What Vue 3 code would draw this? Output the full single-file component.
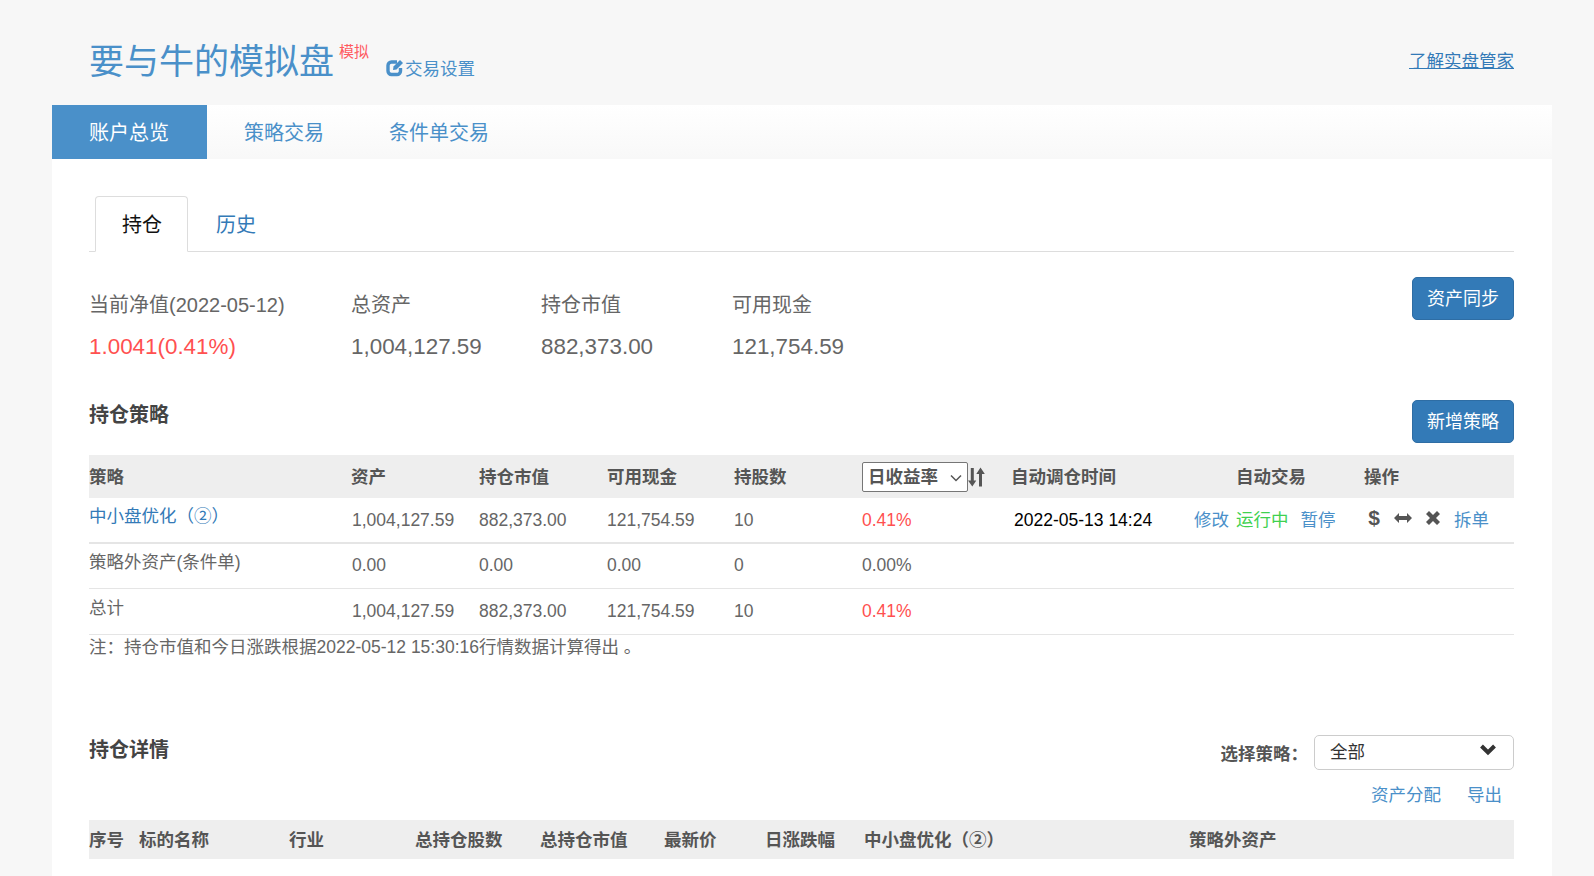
<script setup>
const stats = [
  { label: '当前净值(2022-05-12)', value: '1.0041(0.41%)', cls: 'red', w: 262 },
  { label: '总资产', value: '1,004,127.59', cls: '', w: 190 },
  { label: '持仓市值', value: '882,373.00', cls: '', w: 191 },
  { label: '可用现金', value: '121,754.59', cls: '', w: 160 },
]
const detailHead = ['序号', '标的名称', '行业', '总持仓股数', '总持仓市值', '最新价', '日涨跌幅', '中小盘优化（②）', '策略外资产']
const detailCols = [50, 150, 126, 125, 124, 101, 99, 325, 325]
const strategyCols = [262, 128, 128, 127, 128, 149, 183, 170, 150]
</script>

<template>
  <div class="page">
    <header class="top">
      <div class="brand">
        <span class="title">要与牛的模拟盘</span>
        <sup class="tag">模拟</sup>
        <a class="setting">
          <svg class="edit" viewBox="0 0 19 19" width="19" height="19">
            <path d="M14.500 10v3A3.500 3.500 0 0 1 11 16.500H5.500A3.500 3.500 0 0 1 2 13V7.500A3.500 3.500 0 0 1 5.500 4H11" fill="none" stroke="#4a90c9" stroke-width="3.400"/>
            <path d="M7.500 8.500 14 2l3 3-6.500 6.500-3.500.5z" fill="#4a90c9"/>
          </svg><span class="setting-text">交易设置</span>
        </a>
      </div>
      <a class="learn">了解实盘管家</a>
    </header>

    <nav class="nav">
      <a class="nav-item active">账户总览</a>
      <a class="nav-item">策略交易</a>
      <a class="nav-item third">条件单交易</a>
    </nav>

    <main class="panel">
      <div class="tabs">
        <a class="tab on">持仓</a>
        <a class="tab">历史</a>
      </div>

      <section class="summary">
        <div class="stats">
          <div v-for="s in stats" :key="s.label" class="stat" :style="{ width: s.w + 'px' }">
            <div class="stat-label">{{ s.label }}</div>
            <div class="stat-value" :class="s.cls">{{ s.value }}</div>
          </div>
        </div>
        <button class="btn">资产同步</button>
      </section>

      <section class="section-head">
        <h3>持仓策略</h3>
        <button class="btn">新增策略</button>
      </section>

      <table class="grid strategy">
        <colgroup>
          <col v-for="(c, i) in strategyCols" :key="i" :style="{ width: c + 'px' }" />
        </colgroup>
        <thead>
          <tr>
            <th>策略</th>
            <th>资产</th>
            <th>持仓市值</th>
            <th>可用现金</th>
            <th>持股数</th>
            <th class="sort-cell">
              <div class="sort">
                <div class="sort-box">
                  <select class="sort-select">
                    <option>日收益率</option>
                  </select>
                  <svg class="sort-chevron" viewBox="0 0 12 8" width="12" height="8">
                    <path d="M1 1.500 6 6.500 11 1.500" fill="none" stroke="#555" stroke-width="1.500"/>
                  </svg>
                </div>
                <svg viewBox="0 0 17 20" width="17" height="20">
                  <path d="M2.800 1h3v12.500h2.500L4.300 19.500 0 13.500h2.800z" fill="#555"/>
                  <path d="M11 19.500h3V7h2.800L12.500 .5 8.300 7H11z" fill="#555"/>
                </svg>
              </div>
            </th>
            <th>自动调仓时间</th>
            <th class="auto-head">自动交易</th>
            <th>操作</th>
          </tr>
        </thead>
        <tbody>
          <tr class="r1">
            <td class="name"><a class="link">中小盘优化（②）</a></td>
            <td class="asset">1,004,127.59</td>
            <td>882,373.00</td>
            <td>121,754.59</td>
            <td>10</td>
            <td class="red">0.41%</td>
            <td class="date">2022-05-13 14:24</td>
            <td>
              <div class="auto">
                <a class="link">修改</a>
                <span class="green">运行中</span>
                <a class="link pause">暂停</a>
              </div>
            </td>
            <td>
              <div class="ops">
                <span class="dollar">$</span>
                <svg class="swap" viewBox="0 0 18 10" width="18" height="10">
                  <path d="M0 5l5-5v3h8V0l5 5-5 5V7H5v3z" fill="#555"/>
                </svg>
                <svg viewBox="0 0 16 16" width="16" height="16">
                  <path d="M1 4l3-3 4 4 4-4 3 3-4 4 4 4-3 3-4-4-4 4-3-3 4-4z" fill="#555"/>
                </svg>
                <a class="link">拆单</a>
              </div>
            </td>
          </tr>
          <tr class="r2">
            <td class="name">策略外资产(条件单)</td>
            <td class="asset">0.00</td>
            <td>0.00</td>
            <td>0.00</td>
            <td>0</td>
            <td>0.00%</td>
            <td></td>
            <td></td>
            <td></td>
          </tr>
          <tr class="r3">
            <td class="name">总计</td>
            <td class="asset">1,004,127.59</td>
            <td>882,373.00</td>
            <td>121,754.59</td>
            <td>10</td>
            <td class="red">0.41%</td>
            <td></td>
            <td></td>
            <td></td>
          </tr>
        </tbody>
      </table>
      <p class="note">注：持仓市值和今日涨跌根据2022-05-12 15:30:16行情数据计算得出 。</p>

      <section class="detail-head">
        <h3>持仓详情</h3>
        <div class="filters">
          <div class="pick">
            <label>选择策略：</label>
            <div class="fake-select">
              <span class="fake-value">全部</span>
              <svg viewBox="0 0 18 12" width="18" height="12">
                <path d="M2.500 2 9 8.500 15.500 2" fill="none" stroke="#333" stroke-width="4"/>
              </svg>
            </div>
          </div>
          <div class="tools">
            <a class="link">资产分配</a>
            <a class="link">导出</a>
          </div>
        </div>
      </section>

      <table class="grid detail">
        <colgroup>
          <col v-for="(c, i) in detailCols" :key="i" :style="{ width: c + 'px' }" />
        </colgroup>
        <thead>
          <tr>
            <th v-for="h in detailHead" :key="h">{{ h }}</th>
          </tr>
        </thead>
        <tbody>
          <tr>
            <td></td>
            <td>东鹏饮料</td>
            <td colspan="7"></td>
          </tr>
        </tbody>
      </table>
    </main>
  </div>
</template>

<style>
html, body {
  margin: 0;
  height: 876px;
  overflow: hidden;
  background: #f7f7f7;
}
</style>

<style scoped>
.page {
  width: 1500px;
  margin-left: 52px;
  font-family: "Liberation Sans", "Noto Sans CJK SC", sans-serif;
  font-size: 17.5px;
  color: #666;
}
a { cursor: pointer; }
.top {
  height: 105px;
  box-sizing: border-box;
  padding: 0 38px 0 37px;
  display: flex;
  justify-content: space-between;
  align-items: flex-start;
}
.brand {
  display: flex;
  align-items: flex-start;
  padding-top: 36px;
}
.title {
  font-size: 35px;
  line-height: 52px;
  color: #4a90c9;
}
.tag {
  font-size: 15px;
  line-height: 20px;
  color: #ff5a5f;
  margin: 6px 0 0 5px;
  vertical-align: baseline;
}
.setting {
  display: flex;
  align-items: center;
  margin-left: 17px;
  margin-top: 19px;
  line-height: 26px;
  color: #4a90c9;
}
.edit { margin-bottom: 3px; }
.setting-text { padding-top: 1px; }
.learn {
  margin-top: 48px;
  line-height: 26px;
  color: #337ab7;
  text-decoration: underline;
}
.nav {
  height: 54px;
  display: flex;
  background: linear-gradient(#ffffff, #f8f8f8);
}
.nav-item {
  padding: 0 37px;
  line-height: 56px;
  height: 54px;
  font-size: 20px;
  color: #4a90c9;
}
.nav-item.active {
  padding-right: 38px;
  background: #4a90c9;
  color: #fff;
}
.nav-item.third { margin-left: -9px; }
.panel {
  background: #fff;
  padding: 37px 38px 0 37px;
  height: 700px;
}
.tabs {
  height: 56px;
  box-sizing: border-box;
  border-bottom: 1px solid #ddd;
  display: flex;
  padding-left: 6px;
}
.tab {
  box-sizing: border-box;
  height: 56px;
  padding: 0 26px 0 27px;
  border: 1px solid transparent;
  border-radius: 4px 4px 0 0;
  font-size: 20px;
  line-height: 56px;
  color: #337ab7;
}
.tab.on {
  padding: 0 25px 0 26px;
  border-color: #ddd;
  border-bottom-color: #fff;
  background: #fff;
  color: #111;
}
.summary {
  display: flex;
  justify-content: space-between;
  align-items: flex-start;
  padding-top: 25px;
  height: 123px;
  box-sizing: content-box;
}
.stats {
  display: flex;
  padding-top: 14px;
}
.stat-label {
  font-size: 20px;
  line-height: 28px;
  color: #666;
}
.stat-value {
  font-size: 22.400px;
  line-height: 30px;
  margin-top: 13px;
  color: #666;
}
.btn {
  width: 102px;
  height: 43px;
  border: 1px solid #2e6da4;
  border-radius: 5px;
  background: #337ab7;
  color: #fff;
  font-family: inherit;
  font-size: 18px;
  padding: 0 0 3px;
}
.section-head {
  display: flex;
  justify-content: space-between;
  align-items: flex-start;
  height: 55px;
}
h3 {
  margin: 0;
  font-size: 20px;
  line-height: 28px;
  padding-top: 1px;
  font-weight: 700;
  color: #444;
}
.grid {
  width: 1425px;
  table-layout: fixed;
  border-collapse: separate;
  border-spacing: 0;
}
.grid th {
  background: #eee;
  font-weight: 700;
  text-align: left;
  padding: 0 0 3px;
  color: #555;
}
.grid th.sort-cell { padding: 0; }
.grid td {
  box-sizing: border-box;
  padding: 0;
  vertical-align: middle;
  border-bottom: 1px solid #e5e5e5;
  color: #666;
}
.strategy th { height: 43px; box-sizing: border-box; }
.strategy .r1 td { height: 46px; border-bottom-width: 2px; }
.strategy .r2 td { height: 45px; padding-bottom: 1px; }
.strategy .r3 td { height: 46px; }
.strategy .r1 td.name, .strategy .r2 td.name { padding-bottom: 12px; }
.strategy .r3 td.name { padding-bottom: 10px; }
.strategy td.asset { padding-left: 1px; }
.strategy td.date {
  padding-left: 3px;
  color: #000;
}
.grid td.red { color: #ff5050; }
.red { color: #ff5050 !important; }
.green { color: #3fd14f; }
.link { color: #4a90c9; }
.name .link { color: #337ab7; }
.sort {
  display: flex;
  align-items: center;
}
.sort-box { position: relative; height: 30px; }
.sort-select {
  display: block;
  width: 106px;
  height: 30px;
  box-sizing: border-box;
  appearance: none;
  padding: 0 0 0 5px;
  font: 700 17.500px "Liberation Sans", "Noto Sans CJK SC", sans-serif;
  color: #555;
  background: #fff;
  border: 1px solid #767676;
  border-radius: 2px;
}
.sort-chevron {
  position: absolute;
  left: 88px;
  top: 12px;
}
.auto-head { padding-left: 42px !important; }
.auto {
  display: flex;
  gap: 7px;
  padding-bottom: 3px;
}
.pause { margin-left: 5px; }
.ops {
  display: flex;
  align-items: center;
  padding-left: 4px;
  padding-bottom: 4px;
  gap: 13px;
}
.swap { margin-left: 1px; }
.dollar {
  width: 12px;
  font-size: 21px;
  font-weight: 700;
  color: #555;
  text-align: center;
}
.note {
  margin: 0;
  line-height: 25px;
  color: #666;
}
.detail-head {
  display: flex;
  justify-content: space-between;
  align-items: flex-start;
  margin-top: 75px;
  height: 85px;
}
.filters {
  display: flex;
  flex-direction: column;
  align-items: flex-end;
}
.pick {
  display: flex;
  align-items: center;
}
.pick label {
  font-weight: 700;
  color: #555;
  margin-right: 6px;
}
.fake-select {
  box-sizing: border-box;
  width: 200px;
  height: 35px;
  border: 1px solid #ccc;
  border-radius: 5px;
  padding: 0 16px 0 15px;
  display: flex;
  justify-content: space-between;
  align-items: center;
  color: #333;
}
.fake-value { padding-bottom: 4px; }
.fake-select svg { margin-bottom: 6px; }
.tools {
  display: flex;
  gap: 26px;
  padding-right: 12px;
  margin-top: 11px;
  line-height: 28px;
}
.detail th { height: 39px; box-sizing: border-box; }
.detail td { height: 50px; }
</style>
